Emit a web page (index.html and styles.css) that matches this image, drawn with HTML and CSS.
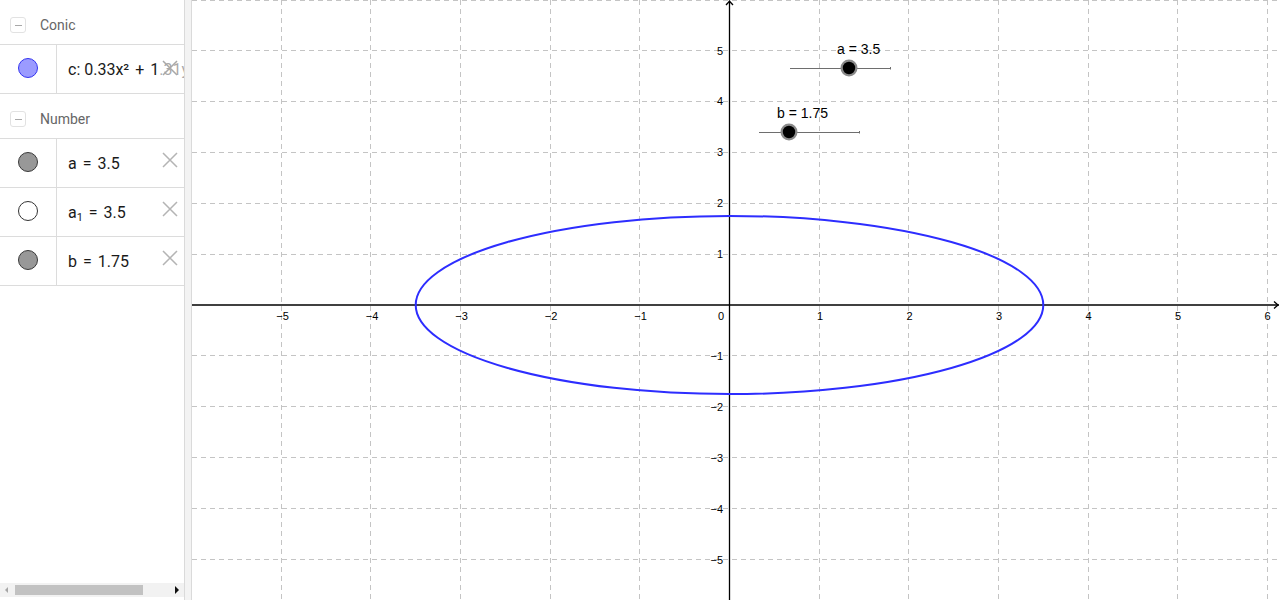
FILE: index.html
```html
<!DOCTYPE html>
<html>
<head>
<meta charset="utf-8">
<link rel="stylesheet" href="styles.css">
</head>
<body>
<div class="app">
  <div class="algebra">
    <div class="group-head">
      <span class="toggle"><span class="minus"></span></span>
      <span class="group-title">Conic</span>
    </div>
    <div class="item">
      <div class="marble-cell"><span class="marble conic"></span></div>
      <div class="item-text">c: 0.33x² <span class="op">+</span> 1.31y² <span class="op">=</span> 4</div>
      <span class="xbtn fade"><svg width="16" height="16" viewBox="0 0 16 16"><path d="M1 1L15 15M15 1L1 15" stroke="#a8a8a8" stroke-width="1.5" fill="none"/></svg></span>
    </div>
    <div class="group-head">
      <span class="toggle"><span class="minus"></span></span>
      <span class="group-title">Number</span>
    </div>
    <div class="item">
      <div class="marble-cell"><span class="marble gray"></span></div>
      <div class="item-text">a <span class="op">=</span> 3.5</div>
      <span class="xbtn"><svg width="16" height="16" viewBox="0 0 16 16"><path d="M1 1L15 15M15 1L1 15" stroke="#b4b4b4" stroke-width="1.5" fill="none"/></svg></span>
    </div>
    <div class="item">
      <div class="marble-cell"><span class="marble white"></span></div>
      <div class="item-text">a<sub>1</sub> <span class="op">=</span> 3.5</div>
      <span class="xbtn"><svg width="16" height="16" viewBox="0 0 16 16"><path d="M1 1L15 15M15 1L1 15" stroke="#b4b4b4" stroke-width="1.5" fill="none"/></svg></span>
    </div>
    <div class="item">
      <div class="marble-cell"><span class="marble gray"></span></div>
      <div class="item-text">b <span class="op">=</span> 1.75</div>
      <span class="xbtn"><svg width="16" height="16" viewBox="0 0 16 16"><path d="M1 1L15 15M15 1L1 15" stroke="#b4b4b4" stroke-width="1.5" fill="none"/></svg></span>
    </div>
    <div class="spacer"></div>
    <div class="hscroll">
      <span class="arrow-left"></span>
      <span class="thumb"></span>
      <span class="arrow-right"></span>
    </div>
  </div>
  <div class="splitter"></div>
  <div class="graphics">
    <svg class="plot" width="1088" height="600" viewBox="0 0 1088 600">
      <g class="grid" stroke="#c4c4c4" stroke-width="1" stroke-dasharray="5 4" shape-rendering="crispEdges">
        <line x1="89.25" y1="0" x2="89.25" y2="600"/>
        <line x1="178.9" y1="0" x2="178.9" y2="600"/>
        <line x1="268.55" y1="0" x2="268.55" y2="600"/>
        <line x1="358.2" y1="0" x2="358.2" y2="600"/>
        <line x1="447.85" y1="0" x2="447.85" y2="600"/>
        <line x1="627.15" y1="0" x2="627.15" y2="600"/>
        <line x1="716.8" y1="0" x2="716.8" y2="600"/>
        <line x1="806.45" y1="0" x2="806.45" y2="600"/>
        <line x1="896.1" y1="0" x2="896.1" y2="600"/>
        <line x1="985.75" y1="0" x2="985.75" y2="600"/>
        <line x1="1075.4" y1="0" x2="1075.4" y2="600"/>
        <line x1="0" y1="0.5" x2="1088" y2="0.5"/>
        <line x1="0" y1="50.5" x2="1088" y2="50.5"/>
        <line x1="0" y1="101.4" x2="1088" y2="101.4"/>
        <line x1="0" y1="152.3" x2="1088" y2="152.3"/>
        <line x1="0" y1="203.2" x2="1088" y2="203.2"/>
        <line x1="0" y1="254.1" x2="1088" y2="254.1"/>
        <line x1="0" y1="355.9" x2="1088" y2="355.9"/>
        <line x1="0" y1="406.8" x2="1088" y2="406.8"/>
        <line x1="0" y1="457.7" x2="1088" y2="457.7"/>
        <line x1="0" y1="508.6" x2="1088" y2="508.6"/>
        <line x1="0" y1="559.5" x2="1088" y2="559.5"/>
      </g>
      <g class="axes" stroke="#000" stroke-width="1.3" fill="none">
        <line x1="0" y1="305" x2="1087" y2="305"/>
        <line x1="537.5" y1="0.5" x2="537.5" y2="600"/>
        <path d="M1082 301.5L1086 305L1082 308.5"/>
        <path d="M534 5L537.5 1.2L541 5"/>
      </g>
      <g class="xlabels" font-family="Liberation Sans, Arial, sans-serif" font-size="11" fill="#000" text-anchor="middle">
        <text x="90.5" y="320">−5</text>
        <text x="180" y="320">−4</text>
        <text x="269.5" y="320">−3</text>
        <text x="359" y="320">−2</text>
        <text x="448.5" y="320">−1</text>
        <text x="532" y="320" text-anchor="end">0</text>
        <text x="628" y="320">1</text>
        <text x="717.5" y="320">2</text>
        <text x="807" y="320">3</text>
        <text x="896.5" y="320">4</text>
        <text x="986" y="320">5</text>
        <text x="1075.5" y="320">6</text>
      </g>
      <g class="ylabels" font-family="Liberation Sans, Arial, sans-serif" font-size="11" fill="#000" text-anchor="end">
        <text x="531" y="54.5">5</text>
        <text x="531" y="105.4">4</text>
        <text x="531" y="156.3">3</text>
        <text x="531" y="207.2">2</text>
        <text x="531" y="258.1">1</text>
        <text x="531" y="359.9">−1</text>
        <text x="531" y="410.8">−2</text>
        <text x="531" y="461.7">−3</text>
        <text x="531" y="512.6">−4</text>
        <text x="531" y="563.5">−5</text>
      </g>
      <ellipse cx="537.5" cy="305" rx="313.8" ry="89.1" fill="none" stroke="#2d2dff" stroke-width="2"/>
      <g class="slider">
        <line x1="598" y1="68.5" x2="699" y2="68.5" stroke="#6e6e6e" stroke-width="1"/>
        <line x1="698.5" y1="67" x2="698.5" y2="69.5" stroke="#6e6e6e" stroke-width="1"/>
        <circle cx="657" cy="68" r="8.5" fill="#8a8a8a"/>
        <circle cx="657" cy="68" r="6.2" fill="#000"/>
        <text x="645" y="53.5" font-family="Liberation Sans, Arial, sans-serif" font-size="14" fill="#000">a = 3.5</text>
      </g>
      <g class="slider">
        <line x1="567" y1="132.5" x2="668" y2="132.5" stroke="#6e6e6e" stroke-width="1"/>
        <line x1="667.5" y1="131" x2="667.5" y2="133.5" stroke="#6e6e6e" stroke-width="1"/>
        <circle cx="597" cy="132" r="8.5" fill="#8a8a8a"/>
        <circle cx="597" cy="132" r="6.2" fill="#000"/>
        <text x="585" y="117.5" font-family="Liberation Sans, Arial, sans-serif" font-size="14" fill="#000">b = 1.75</text>
      </g>
    </svg>
  </div>
</div>
</body>
</html>
```
FILE: styles.css
```css
html, body {
  margin: 0;
  padding: 0;
  background: #fff;
}
body {
  width: 1280px;
  height: 600px;
  overflow: hidden;
  font-family: Roboto, "Liberation Sans", Arial, sans-serif;
}
.app {
  display: flex;
  width: 1280px;
  height: 600px;
}
.algebra {
  width: 184px;
  height: 600px;
  flex: 0 0 184px;
  display: flex;
  flex-direction: column;
  overflow: hidden;
  background: #fff;
}
.group-head {
  height: 45px;
  flex: 0 0 45px;
  box-sizing: border-box;
  padding-top: 6px;
  display: flex;
  align-items: center;
  border-bottom: 1px solid #dcdcdc;
}
.toggle {
  width: 16px;
  height: 16px;
  box-sizing: border-box;
  margin-left: 10px;
  border: 1px solid #e2e2e2;
  border-radius: 3px;
  display: flex;
  align-items: center;
  justify-content: center;
}
.minus {
  width: 7px;
  height: 1px;
  background: #a8a8a8;
}
.group-title {
  margin-left: 14px;
  font-size: 14px;
  color: #666;
}
.item {
  position: relative;
  height: 48px;
  flex: 0 0 48px;
  display: flex;
  align-items: center;
  border-bottom: 1px solid #dcdcdc;
}
.marble-cell {
  width: 57px;
  height: 48px;
  flex: 0 0 57px;
  box-sizing: border-box;
  border-right: 1px solid #dcdcdc;
  display: flex;
  align-items: center;
  padding-bottom: 2px;
}
.marble {
  display: block;
  width: 20px;
  height: 20px;
  box-sizing: border-box;
  margin-left: 18px;
  border-radius: 50%;
  border: 1px solid #333;
}
.marble.conic {
  background: #9b9bff;
  border-color: #3434f0;
}
.marble.gray {
  background: #989898;
  border-color: #3a3a3a;
}
.marble.white {
  background: #fff;
  border-color: #333;
}
.item-text {
  padding-left: 11px;
  font-size: 16px;
  color: #1a1a1a;
  white-space: nowrap;
}
.item-text .op {
  margin: 0 2px;
}
.item-text sub {
  font-size: 11px;
  vertical-align: -3px;
  line-height: 0;
}
.xbtn {
  position: absolute;
  right: 6px;
  top: 13px;
  width: 16px;
  height: 16px;
  display: block;
}
.xbtn svg {
  display: block;
}
.xbtn.fade {
  right: 0;
  width: 27px;
  background: rgba(255, 255, 255, 0.62);
  top: 12px;
  height: 22px;
  display: flex;
  align-items: center;
  justify-content: flex-start;
  padding-left: 5px;
  box-sizing: border-box;
}
.spacer {
  flex: 1 1 auto;
}
.hscroll {
  height: 14px;
  flex: 0 0 14px;
  margin-bottom: 3px;
  background: #f2f2f2;
  display: flex;
  align-items: center;
  position: relative;
}
.arrow-left {
  width: 0;
  height: 0;
  margin-left: 5px;
  border-top: 3px solid transparent;
  border-bottom: 3px solid transparent;
  border-right: 3px solid #a6a6a6;
}
.thumb {
  margin-left: 7px;
  width: 128px;
  height: 10px;
  background: #c2c2c2;
}
.arrow-right {
  width: 0;
  height: 0;
  margin-left: 32px;
  border-top: 4px solid transparent;
  border-bottom: 4px solid transparent;
  border-left: 4px solid #111;
}
.splitter {
  flex: 0 0 8px;
  width: 8px;
  box-sizing: border-box;
  height: 600px;
  background: #f3f3f3;
  border-left: 1px solid #dadada;
  border-right: 1px solid #dadada;
}
.graphics {
  flex: 0 0 1088px;
  width: 1088px;
  height: 600px;
  overflow: hidden;
}
.plot {
  display: block;
}
```
